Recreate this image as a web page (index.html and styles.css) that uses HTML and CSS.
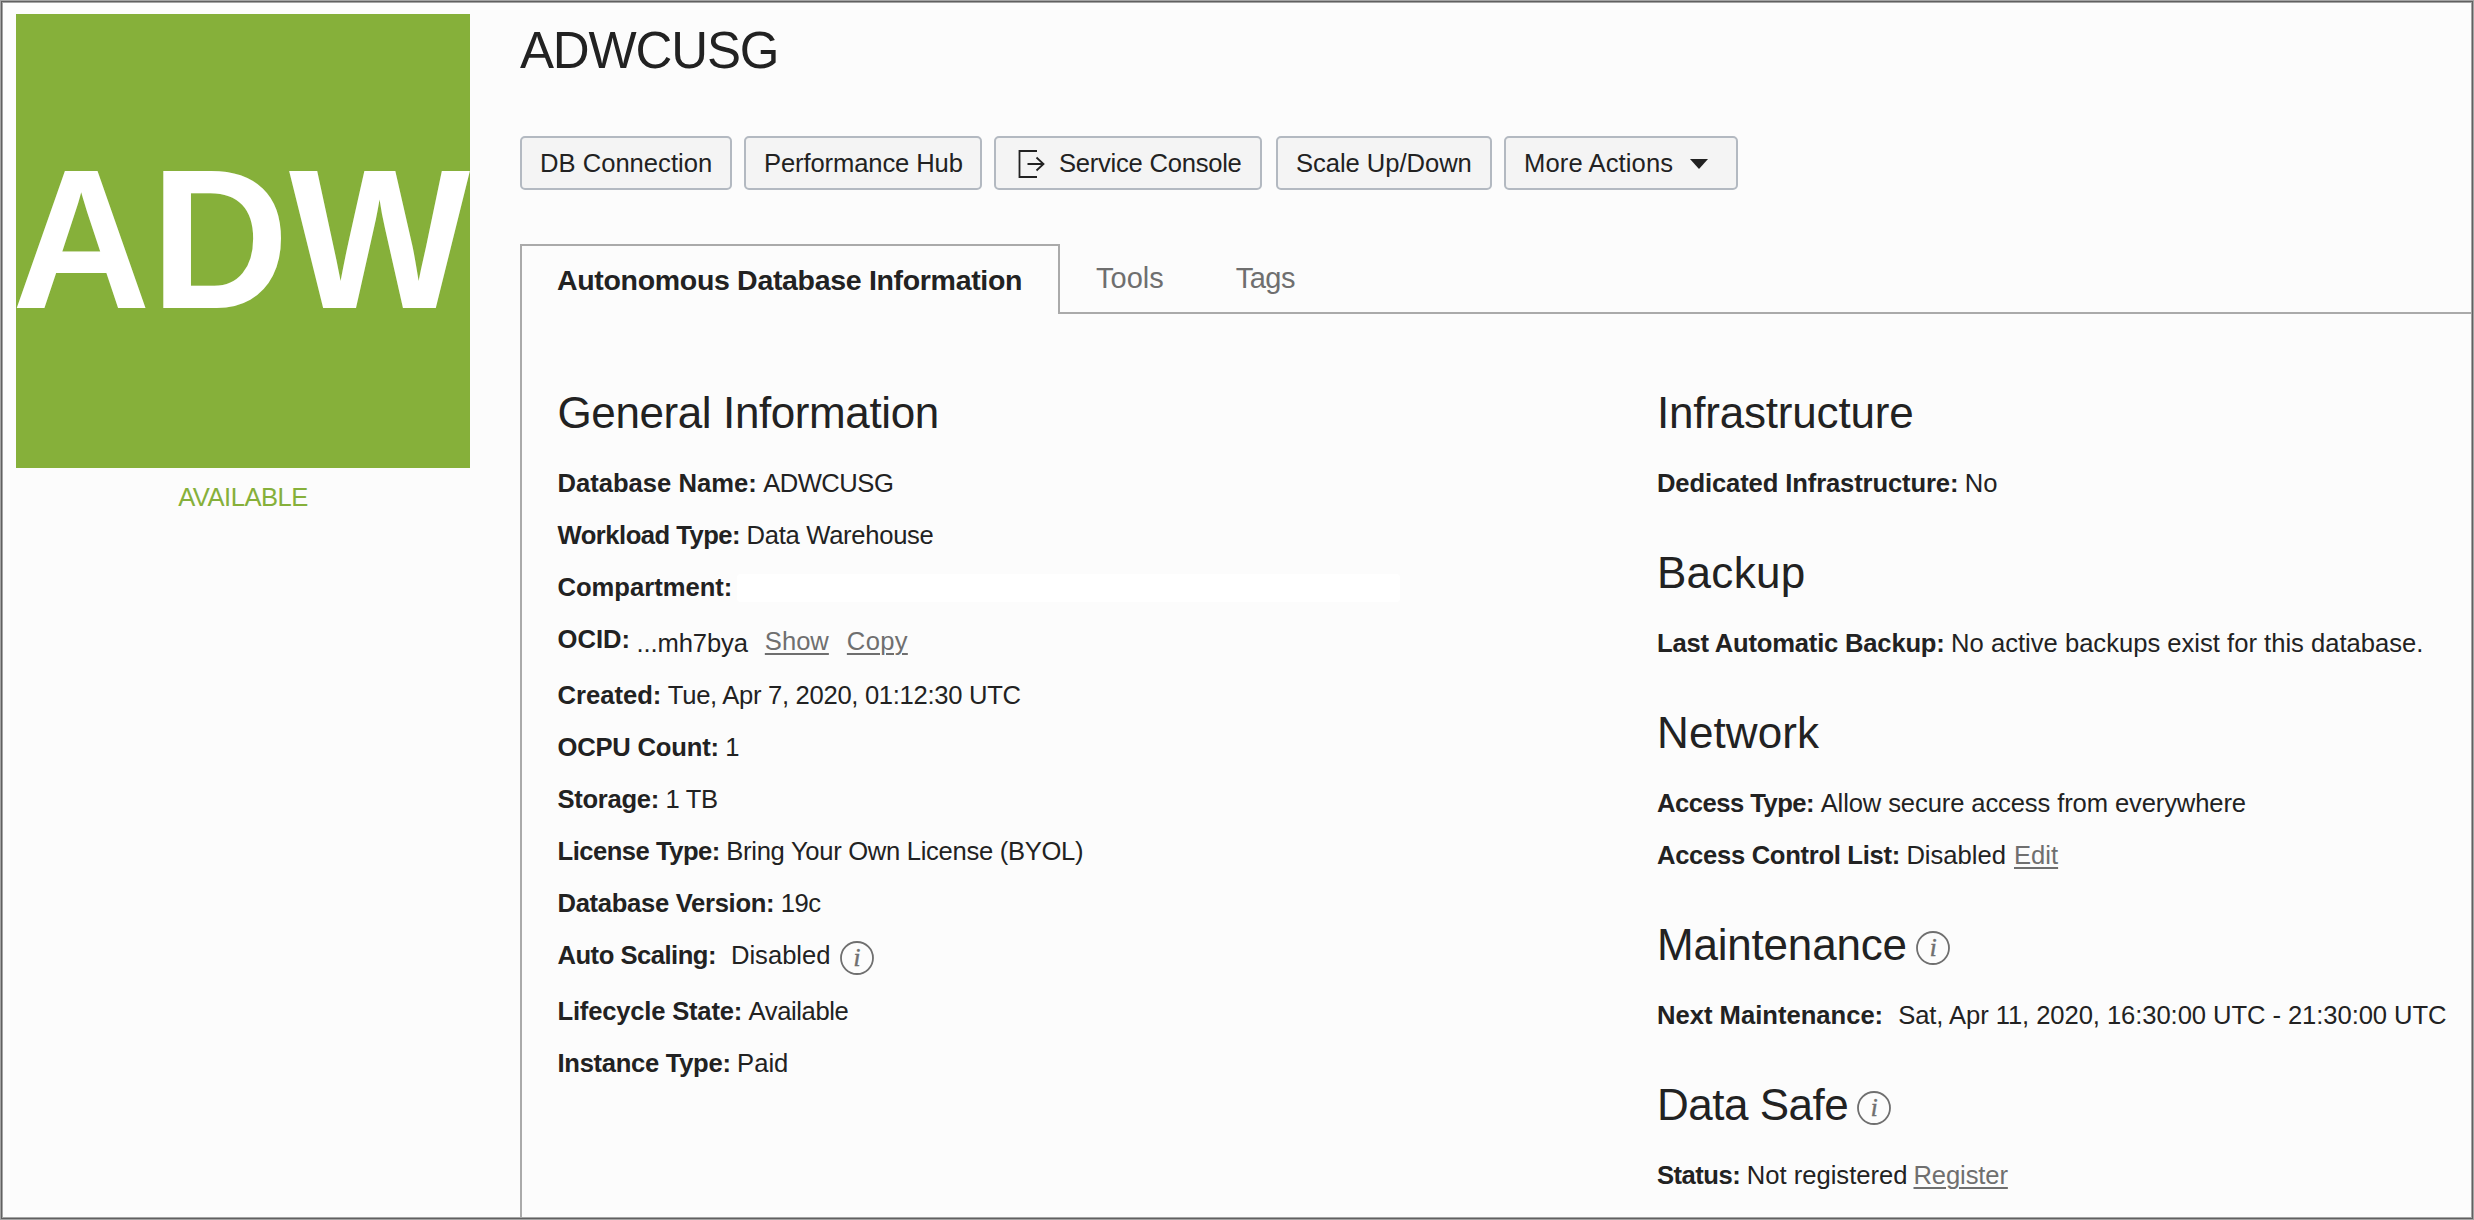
FILE: index.html
```html
<!DOCTYPE html>
<html lang="en">
<head>
<meta charset="utf-8">
<title>ADWCUSG</title>
<link rel="stylesheet" href="styles.css">
</head>
<body>
<div class="page">
  <aside class="status">
    <svg class="badge" width="454" height="454" viewBox="0 0 454 454">
      <text class="badge-text" x="-4" y="293.5" textLength="458" lengthAdjust="spacingAndGlyphs">ADW</text>
    </svg>
    <div class="state t5">AVAILABLE</div>
  </aside>

  <main class="main">
    <h1 class="title">ADWCUSG</h1>

    <div class="actions">
      <button class="btn b-conn">DB Connection</button>
      <button class="btn b-perf">Performance Hub</button>
      <button class="btn b-console t2">
        <svg class="exit" width="28" height="30" viewBox="0 0 28 30" fill="none" stroke="#222" stroke-width="1.8">
          <path d="M19 2H1.5V28H19M9.5 15H25.5M18.5 8.5L25.5 15L18.5 21.5"/>
        </svg>Service Console</button>
      <button class="btn b-scale">Scale Up/Down</button>
      <button class="btn b-more">More Actions
        <svg class="caret" width="18" height="10" viewBox="0 0 18 10"><path d="M0 0H18L9 10Z" fill="#222"/></svg>
      </button>
    </div>

    <nav class="tabs">
      <a class="tab tab-active">Autonomous Database Information</a>
      <div class="tab-rest">
        <a class="tab tab-tools">Tools</a>
        <a class="tab t5">Tags</a>
      </div>
    </nav>

    <div class="panel">
      <section class="col col-left">
        <h2 class="t4">General Information</h2>
        <div class="row"><b>Database Name:</b><span class="t5">ADWCUSG</span></div>
        <div class="row"><b class="t5">Workload Type:</b><span class="t3">Data Warehouse</span></div>
        <div class="row"><b>Compartment:</b><span class="blank"></span></div>
        <div class="row row-tall"><b>OCID:</b><span class="ocid t1">...mh7bya</span><a class="link link-show">Show</a><a class="link link-copy">Copy</a></div>
        <div class="row"><b>Created:</b><span class="t3">Tue, Apr 7, 2020, 01:12:30 UTC</span></div>
        <div class="row"><b class="t2">OCPU Count:</b><span>1</span></div>
        <div class="row"><b class="t3">Storage:</b><span class="t3">1 TB</span></div>
        <div class="row"><b class="t5">License Type:</b><span class="t3">Bring Your Own License (BYOL)</span></div>
        <div class="row"><b class="t3">Database Version:</b><span class="t5">19c</span></div>
        <div class="row row-tall"><b class="t5">Auto Scaling:</b><span class="wide">Disabled</span><svg class="info" width="34" height="34" viewBox="0 0 34 34"><circle cx="17" cy="17" r="16"/><text x="17" y="24.5">i</text></svg></div>
        <div class="row"><b class="t2">Lifecycle State:</b><span class="t4">Available</span></div>
        <div class="row"><b class="t3">Instance Type:</b><span>Paid</span></div>
      </section>

      <section class="col">
        <h2 class="t2">Infrastructure</h2>
        <div class="row"><b class="t1">Dedicated Infrastructure:</b><span>No</span></div>

        <h2 class="p3">Backup</h2>
        <div class="row"><b class="t2">Last Automatic Backup:</b><span>No active backups exist for this database.</span></div>

        <h2 class="p1">Network</h2>
        <div class="row"><b class="t5">Access Type:</b><span class="t1">Allow secure access from everywhere</span></div>
        <div class="row"><b class="t3">Access Control List:</b><span>Disabled</span><a class="link link-edit">Edit</a></div>

        <h2 class="t2">Maintenance<svg class="info" width="34" height="34" viewBox="0 0 34 34"><circle cx="17" cy="17" r="16"/><text x="17" y="24.5">i</text></svg></h2>
        <div class="row"><b>Next Maintenance:</b><span class="wide t0">Sat, Apr 11, 2020, 16:30:00 UTC - 21:30:00 UTC</span></div>

        <h2 class="t5">Data Safe<svg class="info" width="34" height="34" viewBox="0 0 34 34"><circle cx="17" cy="17" r="16"/><text x="17" y="24.5">i</text></svg></h2>
        <div class="row"><b class="t5">Status:</b><span>Not registered</span><a class="link link-reg t1">Register</a></div>
      </section>
    </div>
  </main>
</div>
</body>
</html>
```
FILE: styles.css
```css
* { box-sizing: border-box; }

body {
  margin: 0;
  background: #fcfcfc;
  color: #222;
  font-family: "Liberation Sans", Arial, sans-serif;
  font-size: 25.6px;
}

.page {
  position: relative;
  display: flex;
  height: 1220px;
  padding: 3px;
  overflow: hidden;
}

/* three-tone window edge, painted above the content */
.page::after {
  content: "";
  position: absolute;
  inset: 0;
  pointer-events: none;
  box-shadow: inset 0 0 0 1px #a4a4a4, inset 0 0 0 2px #606060, inset 0 0 0 3px #a4a4a4;
}

/* letter tracking steps */
.t0 { letter-spacing: -0.07px; }
.t1 { letter-spacing: -0.12px; }
.t2 { letter-spacing: -0.2px; }
.t3 { letter-spacing: -0.3px; }
.t4 { letter-spacing: -0.4px; }
.t5 { letter-spacing: -0.5px; }
.p1 { letter-spacing: 0.1px; }
.p3 { letter-spacing: 0.27px; }

.status { width: 454px; margin: 11px 50px 0 13px; flex: none; }
.badge { display: block; overflow: visible; background: #86b03a; }
.badge-text { font-size: 198px; font-weight: 700; fill: #fff; }
.state { margin-top: 11px; line-height: 36px; text-align: center; color: #86b03a; }

.main { flex: 1; min-width: 0; display: flex; flex-direction: column; }

.title {
  margin: 18px 0 55px;
  font-size: 51px;
  font-weight: 400;
  line-height: 60px;
  letter-spacing: -1.15px;
}

.actions { display: flex; gap: 12px; margin-bottom: 54px; }
.btn {
  display: flex;
  align-items: center;
  height: 54px;
  padding: 0 0 0 18px;
  border: 2px solid #b3b9c1;
  border-radius: 5px;
  background: #f4f4f4;
  color: #222;
  font: inherit;
  line-height: 50px;
  white-space: nowrap;
}
.b-conn { width: 212px; letter-spacing: 0; }
.b-perf { width: 238px; letter-spacing: -0.12px; }
.b-console { width: 268px; padding-left: 22px; margin-right: 2px; letter-spacing: -0.25px; }
.b-scale { width: 216px; letter-spacing: -0.05px; }
.b-more { width: 234px; letter-spacing: 0.1px; }
.exit { margin: 2px 13px 0 0; }
.caret { margin: 2px 0 0 17px; }

.tabs { display: flex; height: 70px; }
.tab { line-height: 62px; font-size: 29px; color: #6f6f6f; }
.tab-active {
  width: 540px;
  padding-left: 35px;
  border: 2px solid #aaa;
  border-bottom: 0;
  color: #222;
  font-size: 28.5px;
  font-weight: 700;
  line-height: 68px;
  letter-spacing: -0.32px;
  white-space: nowrap;
}
.tab-rest {
  flex: 1;
  display: flex;
  gap: 72px;
  margin-left: -2px;
  padding: 3px 0 0 38px;
  border-bottom: 2px solid #aaa;
}

.panel {
  flex: 1;
  display: flex;
  padding: 73px 0 0 35.5px;
  border-left: 2px solid #aaa;
  white-space: nowrap;
}
.col-left { width: 1099.5px; }

h2 {
  display: flex;
  margin: 38px 0 18px;
  font-size: 44px;
  font-weight: 400;
  line-height: 52px;
}
h2:first-child { margin-top: 0; }

.row { display: flex; height: 52px; line-height: 52px; }
.row-tall { height: 56px; }
.row b + span { margin-left: 6.5px; }
.row b + .wide { margin-left: 15px; }
.row b + .blank {
  width: 663px;
  height: 28px;
  margin: 13px 0 0 5px;
  border-radius: 4px;
  background: #fff;
}
.row .ocid { margin-top: 4px; }

.link {
  color: #6f6f6f;
  text-decoration: underline;
  text-decoration-thickness: 2px;
  text-underline-offset: 3px;
}
.link-show { margin: 2px 0 0 17px; }
.link-copy { margin: 2px 0 0 18px; letter-spacing: 0.3px; }
.link-edit { margin-left: 8px; }
.link-reg { margin-left: 6px; }

.info { flex: none; margin: 12px 0 0 9px; }
.info circle { fill: none; stroke: #6f6f6f; stroke-width: 1.8; }
.info text {
  fill: #6f6f6f;
  stroke: #6f6f6f;
  stroke-width: 0.5;
  font: italic 25px "Liberation Serif", serif;
  text-anchor: middle;
}
```
